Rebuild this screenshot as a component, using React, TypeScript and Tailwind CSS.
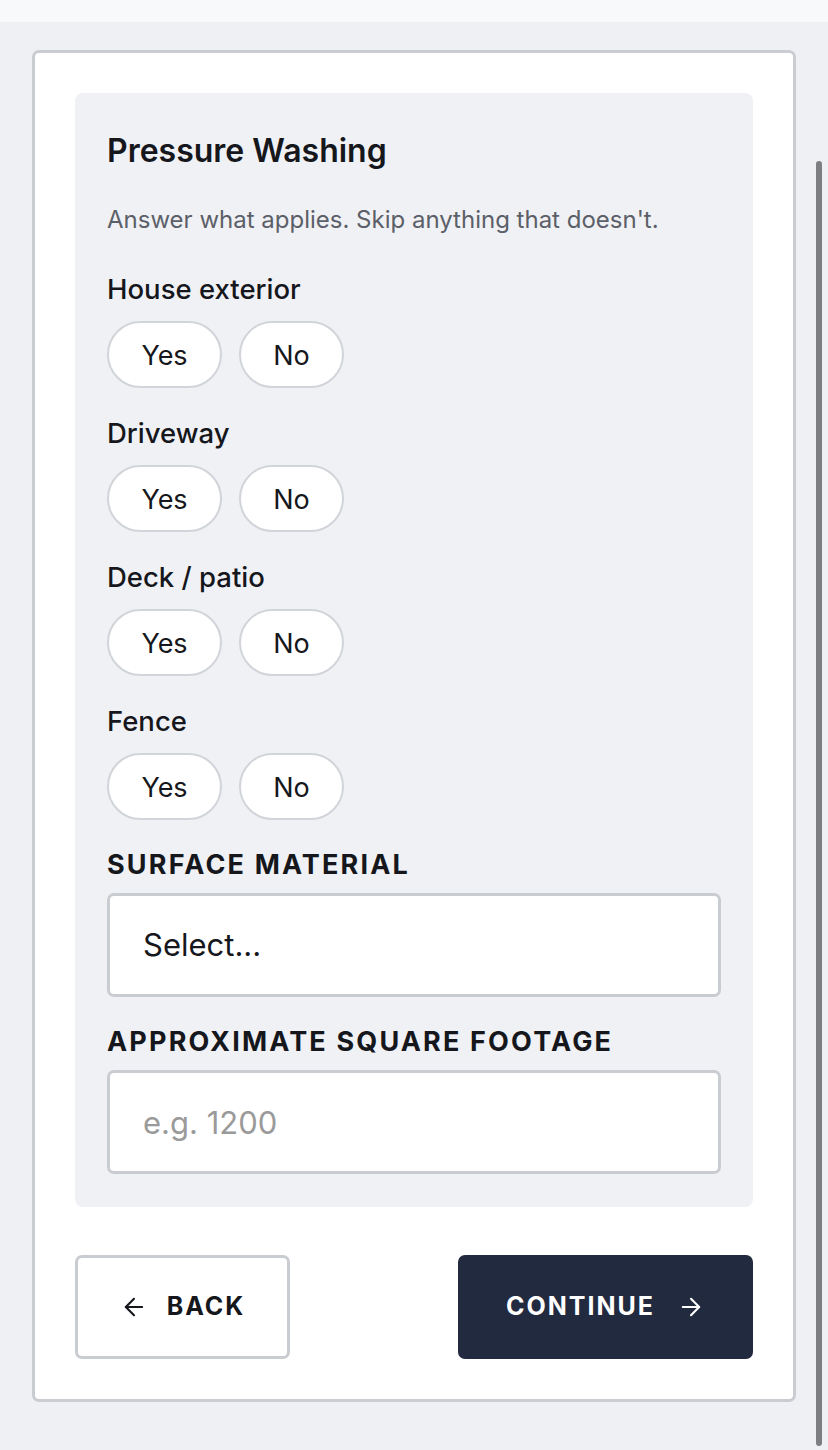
import { ArrowLeft, ArrowRight } from 'lucide-react'

const questions = ['House exterior', 'Driveway', 'Deck / patio', 'Fence']

function YesNo() {
  return (
    <div className="mt-4 flex gap-[17px]">
      <button className="h-[67px] w-[115px] rounded-full border-2 border-[#d1d4d9] bg-white pt-[3px] text-[27px] text-[#15171c]">
        Yes
      </button>
      <button className="h-[67px] w-[105px] rounded-full border-2 border-[#d1d4d9] bg-white pt-[3px] text-[27px] text-[#15171c]">
        No
      </button>
    </div>
  )
}

export default function App() {
  return (
    <div
      className="relative min-h-[1450px] bg-[#eff0f4] text-[#15171c]"
      style={{ fontFamily: 'Inter, "Noto Sans", sans-serif' }}
    >
      <div className="h-[22px] bg-[#f8f9fb]" />

      <div className="px-8 pt-[28px] pb-[49px]">
        <div className="rounded-[7px] border-[3px] border-[#c9ccd1] bg-white p-10">
          {/* Service questions */}
          <div className="rounded-lg bg-[#f0f1f5] px-8 pt-[40px] pb-[33px]">
            <h2 className="text-[32px] leading-[36px] font-semibold">
              Pressure Washing
            </h2>
            <p className="mt-[36px] text-[24px] leading-[30px] text-[#5b6068]">
              Answer what applies. Skip anything that doesn't.
            </p>

            {questions.map((q, i) => (
              <div key={q} className={i === 0 ? 'mt-[38px]' : 'mt-[29px]'}>
                <div className="text-[27.5px] leading-[32px] font-medium">{q}</div>
                <YesNo />
              </div>
            ))}

            <label className="mt-[29px] block text-[27px] leading-[32px] font-bold tracking-[0.08em]">
              SURFACE MATERIAL
            </label>
            <select className="mt-3 block h-[104px] w-full appearance-none rounded-[7px] border-[3px] border-[#c9ccd1] bg-white pl-[33px] text-[31px] text-[#15171c] outline-none">
              <option>Select...</option>
            </select>

            <label className="mt-[29px] block text-[27px] leading-[32px] font-bold tracking-[0.08em]">
              APPROXIMATE SQUARE FOOTAGE
            </label>
            <input
              type="text"
              placeholder="e.g. 1200"
              className="mt-3 block h-[104px] w-full rounded-[7px] border-[3px] border-[#c9ccd1] bg-white pl-[33px] text-[31px] outline-none placeholder:text-[#9a9a9a]"
            />
          </div>

          {/* Navigation */}
          <div className="mt-12 flex items-center justify-between">
            <button className="flex h-[104px] w-[215px] items-center justify-center gap-[19px] rounded-[7px] border-[3px] border-[#c9ccd1] bg-white text-[25px] font-bold tracking-[0.08em] text-[#15171c]">
              <ArrowLeft className="h-[28px] w-[28px]" strokeWidth={1.8} />
              BACK
            </button>
            <button className="flex h-[104px] w-[295px] items-center justify-center gap-[22px] rounded-[7px] bg-[#222a40] text-[25px] font-bold tracking-[0.08em] text-white">
              CONTINUE
              <ArrowRight className="h-[28px] w-[28px]" strokeWidth={1.8} />
            </button>
          </div>
        </div>
      </div>

      {/* overlay scroll indicator */}
      <div className="absolute top-[161px] right-[6px] h-[1285px] w-[6px] rounded-full bg-[#7d7e82]" />
    </div>
  )
}
